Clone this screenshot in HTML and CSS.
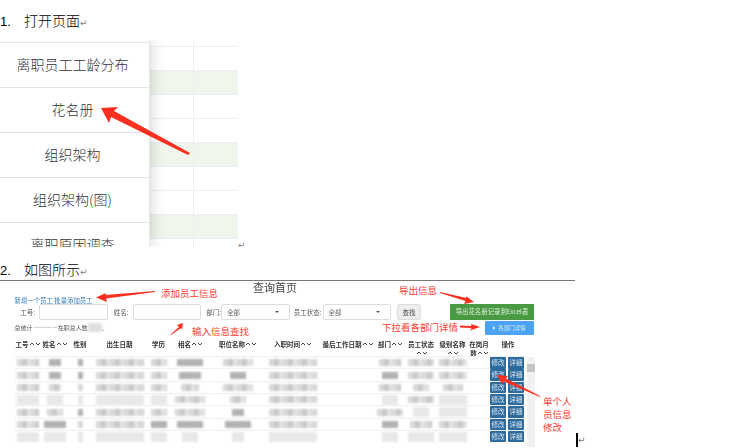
FILE: index.html
```html
<!DOCTYPE html>
<html lang="zh">
<head>
<meta charset="utf-8">
<title>花名册</title>
<link rel="stylesheet" href="styles.css">
</head>
<body>
<div class="doc">
  <p class="step"><span class="num">1.</span><span class="step-text">打开页面</span><span class="mark">↵</span></p>
  <div class="fig-line">
    <div class="fig1">
      <nav class="menu">
        <div class="menu-item">离职员工工龄分布</div>
        <div class="menu-item">花名册</div>
        <div class="menu-item">组织架构</div>
        <div class="menu-item">组织架构(图)</div>
        <div class="menu-item">离职原因调查</div>
      </nav>
      <div class="sheet">
        <div class="sheet-top"></div><div class="sheet-top"></div>
        <i></i><i></i>
        <i class="green"></i><i class="green"></i>
        <i></i><i></i>
        <i></i><i></i>
        <i class="green"></i><i class="green"></i>
        <i></i><i></i>
        <i></i><i></i>
        <i class="green"></i><i class="green"></i>
        <i></i><i></i>
      </div>
      <svg class="overlay" width="238" height="207" viewBox="0 40 238 207">
        <polygon fill="#fb2f1f" points="101,108 118,107 114,111 190,153 188,155 111,117 109,123"/>
      </svg>
    </div>
    <span class="mark">↵</span>
  </div>
  <p class="step step2"><span class="num">2.</span><span class="step-text">如图所示</span><span class="mark">↵</span></p>

  <section class="fig2">
    <div class="soft">
      <h1 class="title">查询首页</h1>
      <div class="links"><a>新增一个员工</a> <a>批量添加员工</a></div>
      <div class="form-row">
        <div class="fields">
          <label class="lab lab-a">工号:</label><span class="input"></span>
          <label class="lab lab-b">姓名:</label><span class="input"></span>
          <label class="lab lab-c">部门:</label><span class="select">全部<b class="caret"></b></span>
          <label class="lab lab-d">员工状态:</label><span class="select">全部<b class="caret"></b></span>
          <span class="btn-find">查找</span>
        </div>
        <span class="btn-export">导出花名册记录到Excel表</span>
      </div>
      <div class="stat-row">
        <div class="stat">总统计 ————在职总人数<span class="stat-blur"></span>、</div>
        <span class="btn-dept"><b class="tri"></b>各部门详情</span>
      </div>
      <div class="thead grid">
        <div>工号<s></s></div><div>姓名<s></s></div><div>性别</div><div>出生日期</div><div>学历</div>
        <div>相名<s></s></div><div>职位名称<s></s></div><div>入职时间<s></s></div><div>最后工作日期<s></s></div>
        <div>部门<s></s></div><div>员工状态<br><s></s></div><div>级别名称<br><s></s></div><div>在岗月<br>数<s></s></div><div>操作</div>
      </div>
      <div class="tbody">
        <div class="rows">
          <div class="row grid"><div><u class="w22"></u></div><div><u class="w12 dk"></u></div><div><u class="w5 dk"></u></div><div><u class="w48"></u></div><div><u class="w16"></u></div><div><u class="w26 dk"></u></div><div><u class="w30"></u></div><div><u class="w48"></u></div><div></div><div><u class="w22"></u></div><div><u class="w26"></u></div><div><u class="w28"></u></div><div></div><div class="ops"><span class="op">修改</span><span class="op">详细</span></div></div>
          <div class="row grid"><div><u class="w22"></u></div><div><u class="w12 dk"></u></div><div><u class="w5 dk"></u></div><div><u class="w48"></u></div><div><u class="w16"></u></div><div><u class="w22 dk"></u></div><div><u class="w16 dk"></u></div><div><u class="w48"></u></div><div></div><div><u class="w16 dk"></u></div><div><u class="w26"></u></div><div><u class="w28"></u></div><div></div><div class="ops"><span class="op">修改</span><span class="op">详细</span></div></div>
          <div class="row grid"><div><u class="w22"></u></div><div><u class="w12"></u></div><div><u class="w5"></u></div><div><u class="w48"></u></div><div><u class="w16"></u></div><div><u class="w18"></u></div><div><u class="w30"></u></div><div><u class="w48"></u></div><div></div><div><u class="w22"></u></div><div><u class="w16"></u></div><div><u class="w20"></u></div><div></div><div class="ops"><span class="op">修改</span><span class="op">详细</span></div></div>
          <div class="row grid"><div><u class="w22 lt"></u></div><div><u class="w16 lt"></u></div><div><u class="w5 lt"></u></div><div><u class="w48 lt"></u></div><div><u class="w16 lt"></u></div><div><u class="w30"></u></div><div><u class="w16"></u></div><div><u class="w48"></u></div><div></div><div><u class="w16 lt"></u></div><div><u class="w26"></u></div><div><u class="w28 lt"></u></div><div></div><div class="ops"><span class="op">修改</span><span class="op">详细</span></div></div>
          <div class="row grid"><div><u class="w22"></u></div><div><u class="w16"></u></div><div><u class="w5 dk"></u></div><div><u class="w48"></u></div><div><u class="w16"></u></div><div><u class="w30"></u></div><div><u class="w12 dk"></u></div><div><u class="w48"></u></div><div></div><div><u class="w26"></u></div><div><u class="w16 lt"></u></div><div><u class="w28 lt"></u></div><div></div><div class="ops"><span class="op">修改</span><span class="op">详细</span></div></div>
          <div class="row grid"><div><u class="w22"></u></div><div><u class="w22 dk"></u></div><div><u class="w5"></u></div><div><u class="w48"></u></div><div><u class="w16 dk"></u></div><div><u class="w26 dk"></u></div><div><u class="w26 dk"></u></div><div><u class="w48"></u></div><div></div><div><u class="w16 dk"></u></div><div><u class="w22"></u></div><div><u class="w28"></u></div><div></div><div class="ops"><span class="op">修改</span><span class="op">详细</span></div></div>
          <div class="row grid"><div><u class="w22 lt"></u></div><div><u class="w22 lt"></u></div><div><u class="w5 lt"></u></div><div><u class="w48 lt"></u></div><div><u class="w16 lt"></u></div><div><u class="w16 lt"></u></div><div><u class="w12 lt"></u></div><div><u class="w48 lt"></u></div><div></div><div><u class="w16 lt"></u></div><div><u class="w26 lt"></u></div><div><u class="w28 lt"></u></div><div></div><div class="ops"><span class="op">修改</span><span class="op">详细</span></div></div>
        </div>
        <div class="scrollbar"><span class="sb-up"></span><span class="sb-thumb"></span></div>
      </div>
    </div>

    <svg class="overlay" width="575" height="167" viewBox="0 281 575 167">
      <g fill="#fb2f1f">
        <polygon points="96,297.5 106,293 105.5,295 155,291 155,292 106,298.5 107,302"/>
        <polygon points="183,323 177,325 179,327 170,335 171,335 181,328 182,330"/>
        <polygon points="474,302 466,296 466.5,298 440,292 440,293 465.5,301 464,304"/>
        <polygon points="480,327 471,324 471.5,326 460,325.5 460,327.5 471.5,328 470,330.5"/>
        <polygon points="497,375 508,376 506,378.5 540,396 540,397 504,381.5 502,384"/>
      </g>
    </svg>
    <span class="note note-add">添加员工信息</span>
    <span class="note note-input">输入信息查找</span>
    <span class="note note-export">导出信息</span>
    <span class="note note-drop">下拉看各部门详情</span>
    <span class="note note-single">单个人<br>员信息<br>修改</span>
    <span class="cursor"></span>
    <span class="mark mark-end">↵</span>
  </section>
</div>
</body>
</html>
```
FILE: styles.css
```css
* { box-sizing: border-box; }
html, body { margin: 0; height: 100%; overflow: hidden; background: #fff; }
body { font-family: "Noto Sans CJK SC", "Liberation Sans", sans-serif; color: #000; }
.doc { width: 735px; height: 448px; overflow: hidden; }

.step { margin: 0; height: 40px; line-height: 40px; font-size: 14px; display: flex; align-items: baseline; }
.step2 { height: 33px; line-height: 20px; padding-top: 12px; }
.step-text { font-weight: 300; }
.num { width: 24px; font-family: "Liberation Sans", sans-serif; font-size: 13px; }
.mark { color: #808080; font: 9px/1 "DejaVu Sans", sans-serif; }

.fig-line { display: flex; height: 207px; align-items: flex-end; }
.fig-line .mark { margin-bottom: -3px; }
.fig1 { position: relative; width: 238px; height: 207px; overflow: hidden; display: flex; }
.menu { width: 150px; height: 207px; padding-top: 2px; background: #fff; position: relative; z-index: 1; box-shadow: 0 0 14px rgba(0,0,0,.2); border-right: 1px solid #e8e8e8; flex: none; }
.menu-item { height: 45px; border-top: 1px solid #e3e3e6; line-height: 42px; font-size: 14px; font-weight: 300; color: #333; text-align: center; padding-right: 4px; }
.sheet { flex: 1; display: grid; grid-template-columns: 44px 44px; grid-template-rows: 7px; grid-auto-rows: 24px; align-content: start; }
.sheet-top { height: 7px; border-bottom: 1px solid #eeeef5; grid-row: 1; }
.sheet i { border-bottom: 1px solid #eeeef5; }
.sheet i:nth-child(odd), .sheet-top:first-child { border-right: 1px solid #eeeef5; }
.sheet i.green { background: #f0f6ec; }
.overlay { position: absolute; left: 0; top: 0; z-index: 3; pointer-events: none; }

.fig2 { position: relative; width: 575px; height: 168px; border-top: 1px solid #777; overflow: visible; }
.soft { filter: blur(.35px); }
.title { margin: 0; height: 14px; padding-right: 25px; line-height: 13px; font-size: 11px; font-weight: 400; color: #444; text-align: center; }
.links { height: 9px; line-height: 9px; padding: 1px 0 0 14.5px; font-size: 6.4px; color: #337ab7; white-space: nowrap; }
.form-row { height: 16px; padding-right: 41px; display: flex; justify-content: space-between; align-items: flex-start; }
.fields { display: flex; align-items: center; height: 16px; font-size: 6.5px; color: #555; }
.lab { white-space: nowrap; text-align: right; }
.lab-a { width: 39px; padding-right: 4px; }
.lab-b { width: 25px; padding-right: 4px; }
.lab-c { width: 20px; }
.lab-d { width: 33px; padding-right: 1px; }
.input, .select { height: 16px; width: 68.5px; border: 1px solid #ddd; border-radius: 2px; background: #fff; display: flex; align-items: center; justify-content: space-between; padding: 0 10px 0 5px; color: #666; }
.caret { border: 2px solid transparent; border-top: 2.5px solid #555; border-bottom: 0; }
.btn-find { margin-left: 6px; width: 24px; height: 16px; line-height: 15px; text-align: center; background: #eee; border: 1px solid #ddd; border-radius: 2px; color: #444; }
.btn-export { width: 84px; height: 16px; line-height: 16px; background: #4a9a43; border-radius: 1px; color: #dff0dc; font-size: 6.4px; text-align: center; white-space: nowrap; }
.stat-row { height: 15px; padding: 0 41px 0 14.5px; display: flex; justify-content: space-between; align-items: center; }
.stat { font-size: 6px; color: #555; display: flex; align-items: center; white-space: nowrap; }
.stat-blur { width: 14px; height: 9px; background: #ddd; filter: blur(1.5px); }
.btn-dept { width: 49px; height: 14px; background: #4aa3f5; color: #d8edff; font-size: 5.5px; display: flex; align-items: center; justify-content: center; gap: 3px; border-radius: 1px; white-space: nowrap; }
.tri { border: 2px solid transparent; border-left: 2.5px solid #fff; border-right: 0; }

.grid { display: grid; grid-template-columns: 27px 27px 24px 55px 23px 40px 55px 55px 55px 30px 32px 31px 22px 36px; width: 512px; margin-left: 14px; }
.thead { height: 21px; padding-top: 5px; font-size: 6.5px; font-weight: 700; line-height: 9px; color: #333; text-align: center; white-space: nowrap; }
.thead s { display: inline-block; width: 10px; height: 4px; margin-left: 1px; vertical-align: 0; background:
  linear-gradient(135deg, transparent 45%, #444 45% 70%, transparent 70%) 0 0 / 2px 2px no-repeat,
  linear-gradient(225deg, transparent 45%, #444 45% 70%, transparent 70%) 2px 0 / 2px 2px no-repeat,
  linear-gradient(45deg, transparent 45%, #444 45% 70%, transparent 70%) 6px 0 / 2px 2px no-repeat,
  linear-gradient(315deg, transparent 45%, #444 45% 70%, transparent 70%) 8px 0 / 2px 2px no-repeat; }
.tbody { display: flex; align-items: flex-start; }
.rows { width: 527px; }
.row { height: 12.33px; border-top: 1px solid #f0f0f0; align-items: center; justify-items: center; }
.row u { display: block; height: 7px; background: repeating-linear-gradient(90deg, #d8d8d8 0 5px, #c8c8c8 5px 10px, #e2e2e2 10px 14px); filter: blur(1.2px); }
.row u.dk { background: #b2b2b2; }
.row u.lt { background: #e8e8e8; height: 10px; }
.w5 { width: 5px; } .w12 { width: 12px; } .w16 { width: 16px; } .w18 { width: 18px; } .w20 { width: 20px; } .w22 { width: 22px; } .w26 { width: 26px; } .w28 { width: 28px; } .w30 { width: 30px; } .w48 { width: 48px; }
.ops { display: flex; gap: 2px; justify-content: flex-end; width: 100%; padding-right: 2px; }
.op { width: 16px; height: 11.5px; line-height: 11px; border-radius: 1px; background: #2c6a9e; color: #dbe8f3; font-size: 6.5px; text-align: center; }
.scrollbar { width: 8px; height: 90px; margin-top: 1px; background: #f1f1f1; display: flex; flex-direction: column; flex: none; }
.sb-up { height: 7px; }
.sb-thumb { height: 8px; background: #c4c4c4; }

.note { position: absolute; z-index: 4; color: #fb3a32; font-size: 9.5px; line-height: 13px; white-space: nowrap; }
.note-add { left: 161px; top: 6px; }
.note-input { left: 192px; top: 44px; }
.note-export { left: 399px; top: 3px; }
.note-drop { left: 382px; top: 40px; }
.note-single { left: 543px; top: 114px; }
.cursor { position: absolute; left: 576px; top: 152px; width: 2px; height: 14px; background: #000; }
.mark-end { position: absolute; left: 578px; top: 155px; }
```
